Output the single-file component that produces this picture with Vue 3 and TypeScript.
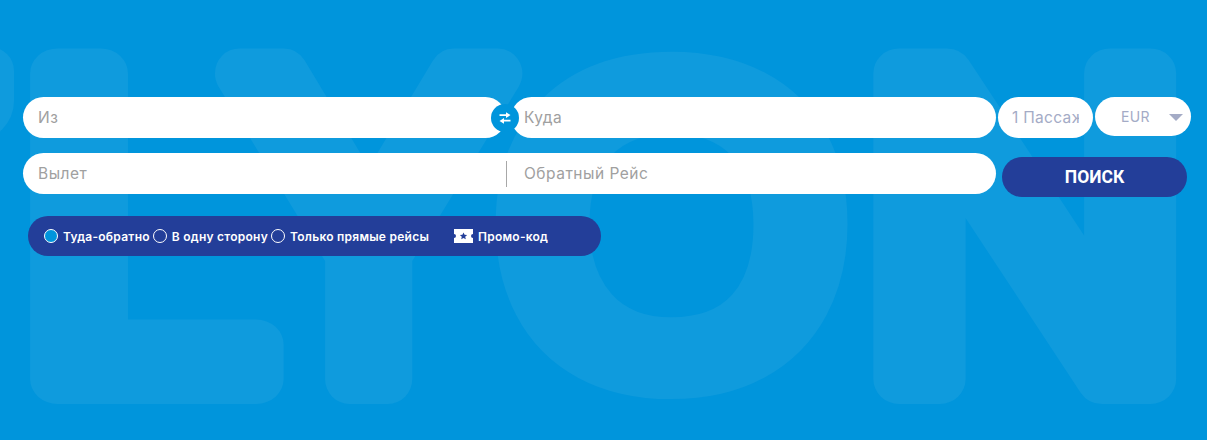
<script setup lang="ts">
import { ref } from 'vue'

const tripType = ref('round')
const currency = ref('EUR')
const passengers = ref('1 Пассажир')

const tripOptions = [
  { id: 'round', label: 'Туда-обратно' },
  { id: 'oneway', label: 'В одну сторону' },
  { id: 'direct', label: 'Только прямые рейсы' },
]

const letters = [
  { ch: 'L', cls: '', tf: 'translate(17 379) scale(1.1 1)' },
  { ch: 'Y', cls: '', tf: 'translate(229 379) scale(0.98 1)' },
  { ch: 'O', cls: 'wm-round', tf: 'translate(501 370) scale(1.045 1)' },
  { ch: 'N', cls: '', tf: 'translate(861 379) scale(1.035 1)' },
]
</script>

<template>
  <div class="hero">
    <svg class="watermark" width="1207" height="440" aria-hidden="true">
      <text
        v-for="l in letters"
        :key="l.ch"
        :transform="l.tf"
        class="wm-letter"
        :class="l.cls"
      >{{ l.ch }}</text>
    </svg>
    <div class="wm-sliver"></div>

    <form class="search" @submit.prevent>
      <div class="row row-top">
        <div class="route">
          <input class="field field-from" type="text" placeholder="Из" />
          <button class="swap" type="button" aria-label="Поменять">
            <svg width="12" height="12" viewBox="0 0 12 12">
              <path d="M.5 2.300H7V.2l4.500 2.900L7 6V4H.5zM11.500 7.700H5V6L.5 8.900 5 11.800V9.500h6.500z" fill="#fff" />
            </svg>
          </button>
          <input class="field field-to" type="text" placeholder="Куда" />
        </div>
        <input v-model="passengers" class="pax" type="text" readonly />
        <div class="currency">
          <select v-model="currency">
            <option>EUR</option>
            <option>USD</option>
          </select>
          <span class="caret"></span>
        </div>
      </div>

      <div class="row row-mid">
        <div class="dates">
          <input class="date" type="text" placeholder="Вылет" />
          <span class="divider"></span>
          <input class="date date-back" type="text" placeholder="Обратный Рейс" />
        </div>
        <button class="submit" type="submit">ПОИСК</button>
      </div>

      <div class="options">
        <label v-for="o in tripOptions" :key="o.id" class="opt">
          <input v-model="tripType" type="radio" :value="o.id" />
          <span>{{ o.label }}</span>
        </label>
        <a class="promo">
          <svg width="19" height="14" viewBox="0 0 19 14">
            <path d="M0 0H19V5a2 2 0 0 0 0 4V14H0V9A2 2 0 0 0 0 5z" fill="#fff" />
            <path d="M9.500 3.400l1.100 2.400 2.500.2-1.900 1.700.6 2.500-2.300-1.300-2.300 1.300.6-2.500L5.900 6l2.500-.2z" fill="#233e99" />
          </svg>
          <span>Промо-код</span>
        </a>
      </div>
    </form>
  </div>
</template>

<style scoped>
.hero {
  position: relative;
  width: 1207px;
  height: 440px;
  overflow: hidden;
  background: #0095dc;
  font-family: Inter, "Open Sans", sans-serif;
}

.watermark {
  position: absolute;
  inset: 0;
}

.wm-letter {
  font-family: Inter, sans-serif;
  font-size: 420px;
  font-weight: 400;
  fill: #0f9bdd;
  stroke: #0f9bdd;
  stroke-width: 50px;
  stroke-linejoin: round;
}

.wm-round {
  font-family: "Liberation Sans", sans-serif;
}

.wm-sliver {
  position: absolute;
  left: -40px;
  top: 47px;
  width: 54px;
  height: 94px;
  border-radius: 0 24px 40px 0;
  background: #0f9bdd;
}

.search {
  position: relative;
  padding: 97px 16px 0 23px;
}

.row {
  display: flex;
}

.row-top {
  align-items: flex-start;
  gap: 2px;
}

.route {
  position: relative;
  display: flex;
  gap: 5px;
}

input,
select {
  border: none;
  outline: none;
  font-family: inherit;
  box-sizing: border-box;
}

input::placeholder {
  color: #a0a0a0;
  opacity: 1;
}

.field {
  height: 41px;
  border-radius: 21px;
  background: #fff;
  font-size: 15.5px;
  letter-spacing: 0.5px;
  padding: 0 15px;
}

.field-from {
  width: 483px;
}

.field-to {
  width: 485px;
  padding-left: 13px;
}

.swap {
  position: absolute;
  left: 468px;
  top: 7px;
  display: flex;
  align-items: center;
  justify-content: center;
  width: 28px;
  height: 28px;
  padding: 0;
  border: none;
  border-radius: 50%;
  background: #0095dc;
}

.pax {
  width: 95px;
  height: 41px;
  padding: 0 14px;
  border-radius: 21px;
  background: #fff;
  color: #a4abc6;
  font-size: 15.5px;
  letter-spacing: 0.3px;
}

.currency {
  position: relative;
  width: 96px;
  height: 39px;
}

.currency select {
  width: 100%;
  height: 100%;
  padding-left: 26px;
  border-radius: 20px;
  background: #fff;
  color: #a4abc6;
  font-size: 14px;
  letter-spacing: 0.3px;
  appearance: none;
}

.caret {
  position: absolute;
  right: 8px;
  top: 17px;
  width: 0;
  height: 0;
  border-left: 7px solid transparent;
  border-right: 7px solid transparent;
  border-top: 7px solid #a4abc6;
}

.row-mid {
  align-items: flex-start;
  gap: 6px;
  margin-top: 15px;
}

.dates {
  display: flex;
  align-items: center;
  width: 973px;
  height: 41px;
  border-radius: 21px;
  background: #fff;
}

.date {
  height: 100%;
  background: transparent;
  font-size: 15.5px;
  letter-spacing: 0.5px;
}

.date:first-child {
  width: 483px;
  padding-left: 15px;
}

.divider {
  width: 1px;
  height: 26px;
  background: #a8a8a8;
}

.date-back {
  flex: 1;
  padding-left: 17px;
}

.submit {
  width: 185px;
  height: 40px;
  margin-top: 4px;
  border: none;
  border-radius: 20px;
  background: #233e99;
  color: #fff;
  font-family: Roboto, sans-serif;
  font-size: 17.5px;
  font-weight: 700;
}

.options {
  display: flex;
  align-items: center;
  gap: 3px;
  box-sizing: border-box;
  width: 573px;
  height: 40px;
  margin: 19px 0 0 5px;
  padding-left: 16px;
  border-radius: 20px;
  background: #233e99;
  color: #fff;
  font-size: 12px;
  font-weight: 600;
  letter-spacing: 0.25px;
}

.opt {
  display: flex;
  align-items: center;
  gap: 5px;
}

.opt input {
  width: 14px;
  height: 14px;
  margin: 0;
  border: 1px solid #fff;
  border-radius: 50%;
  background: transparent;
  appearance: none;
}

.opt input:checked {
  border-width: 1.5px;
  background: #0095dc;
}

.promo {
  display: flex;
  align-items: center;
  gap: 5px;
  margin-left: 22px;
}
</style>
